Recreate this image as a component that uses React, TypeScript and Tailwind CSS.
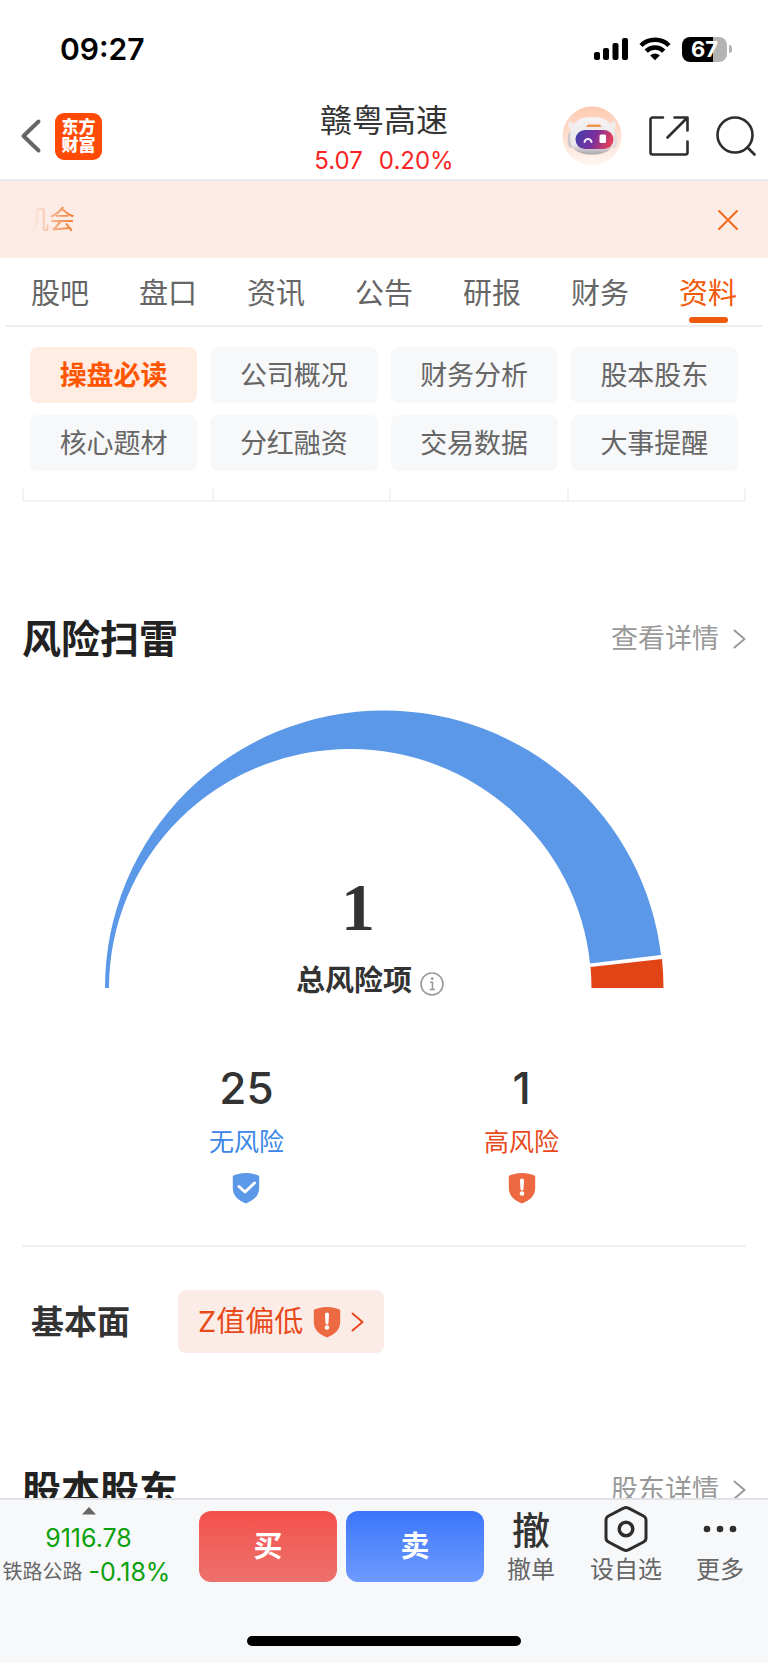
const tabs = ["股吧", "盘口", "资讯", "公告", "研报", "财务", "资料"];

const sections = [
  "操盘必读",
  "公司概况",
  "财务分析",
  "股本股东",
  "核心题材",
  "分红融资",
  "交易数据",
  "大事提醒",
];

const StatusBar = () => {
  return (
    <div className="flex items-center justify-between h-[98px] pl-[60px] pr-9">
      <div className="text-[30px] leading-[34px] font-semibold text-black">
        09:27
      </div>
      <div className="flex items-center gap-[11px]">
        <svg width="34" height="24" viewBox="0 0 34 24" fill="#000">
          <rect x="0" y="15" width="6" height="8" rx="2" />
          <rect x="9" y="11" width="6" height="12" rx="2" />
          <rect x="18.500" y="6" width="6" height="17" rx="2" />
          <rect x="28" y="1" width="6" height="22" rx="2" />
        </svg>
        <svg width="32" height="24" viewBox="0 0 32 24" fill="none" stroke="#000">
          <path d="M2 8.500a20 20 0 0 1 28 0" strokeWidth="4.500" />
          <path d="M7.200 14.200a12.500 12.500 0 0 1 17.600 0" strokeWidth="4.500" />
          <path d="M16 23.200l-4.800-4.700a6.800 6.800 0 0 1 9.600 0z" fill="#000" stroke="none" />
        </svg>
        <div className="flex items-center gap-[2px]">
          <div className="flex justify-center items-center w-[45px] h-[25px] rounded-[8px] bg-linear-to-r from-black from-[68%] to-[#b3b3b3] to-[68%] text-[22px] leading-[25px] font-bold text-white">
            67
          </div>
          <div className="w-[3px] h-[8px] rounded-r-full bg-[#b3b3b3]" />
        </div>
      </div>
    </div>
  );
};

const Robot = () => {
  return (
    <svg width="60" height="60" viewBox="0 0 60 60">
      <defs>
        <linearGradient id="halo" x1="0" y1="0" x2="0" y2="1">
          <stop offset="0" stopColor="#fdc9b0" />
          <stop offset="1" stopColor="#fff6f2" />
        </linearGradient>
        <linearGradient id="shell" x1="0" y1="0" x2="0" y2="1">
          <stop offset="0" stopColor="#f6f3f4" />
          <stop offset="0.750" stopColor="#e9e5e7" />
          <stop offset="1" stopColor="#aaa4a8" />
        </linearGradient>
        <linearGradient id="visor" x1="0" y1="0" x2="1" y2="0.200">
          <stop offset="0" stopColor="#3d3fae" />
          <stop offset="0.550" stopColor="#7a2f9c" />
          <stop offset="1" stopColor="#e0405c" />
        </linearGradient>
      </defs>
      <circle cx="30" cy="30" r="29.500" fill="url(#halo)" />
      <ellipse cx="9" cy="34" rx="3.500" ry="8" fill="#cfc8cc" />
      <ellipse cx="52" cy="34" rx="3.500" ry="8" fill="#e2dadd" />
      <path d="M8.500 13.500c0 3.500 3 5 9 4.500l-6 8c-5-1-7-8-3-12.500zM51.500 13.500c0 3.500-3 5-9 4.500l6 8c5-1 7-8 3-12.500z" fill="#f1ecee" />
      <path d="M30 11c12 0 20 4 22.500 16 2 14-5 21.500-22.500 21.500S6.500 41 8.500 27C11 15 18 11 30 11z" fill="url(#shell)" />
      <path d="M26 18.500h12l1.500 2.500H24z" fill="#ee9650" />
      <rect x="13.500" y="24" width="38" height="19" rx="9.500" fill="url(#visor)" />
      <path d="M22.500 36c1-4 6-4 7 0" fill="none" stroke="#f3e9ff" strokeWidth="2" strokeLinecap="round" />
      <rect x="37.500" y="28.500" width="6.500" height="8.500" rx="1.500" fill="#fff" />
    </svg>
  );
};

const Header = () => {
  return (
    <header className="grid grid-cols-[1fr_auto_1fr] items-start px-3 border-b-2 border-[#ebebed]">
      <div className="flex items-center gap-[13px] h-[76px] pl-2">
        <button type="button" aria-label="返回">
          <svg width="22" height="36" viewBox="0 0 22 36" fill="none" stroke="#666" strokeWidth="4" strokeLinecap="round" strokeLinejoin="round">
            <path d="M18.500 3.500L3.500 18l15 14.500" />
          </svg>
        </button>
        <a
          href="#home"
          className="flex flex-col justify-center items-center w-[47px] h-[47px] rounded-[9px] bg-[#ff4a05] text-[17px] leading-[18px] font-black text-white"
        >
          <span>东方</span>
          <span>财富</span>
        </a>
      </div>
      <div className="flex flex-col items-center gap-1 pt-[5px]">
        <h1 className="text-[32px] leading-[36px] text-[#333]">赣粤高速</h1>
        <div className="flex gap-4 text-[24px] leading-[36px] text-[#fa2424]">
          <span>5.07</span>
          <span>0.20%</span>
        </div>
      </div>
      <div className="flex justify-end items-center gap-[27px] h-[76px]">
        <button type="button" aria-label="智能助手">
          <Robot />
        </button>
        <button type="button" aria-label="分享">
          <svg width="40" height="40" viewBox="0 0 40 40" fill="none" stroke="#2d2d2d" strokeWidth="2.600" strokeLinecap="round" strokeLinejoin="round">
            <path d="M14 1.500H3.500a2 2 0 0 0-2 2v33a2 2 0 0 0 2 2h33a2 2 0 0 0 2-2V25.500" />
            <path d="M25.500 1.500h13v13M38 2L18.500 21.500" />
          </svg>
        </button>
        <button type="button" aria-label="搜索">
          <svg width="40" height="40" viewBox="0 0 40 40" fill="none" stroke="#2d2d2d" strokeWidth="2.600" strokeLinecap="round">
            <circle cx="19" cy="19" r="17.500" />
            <path d="M31.500 31.500l7 7" />
          </svg>
        </button>
      </div>
    </header>
  );
};

const Banner = () => {
  return (
    <div className="flex justify-between items-center h-[77px] pl-8 pr-[28px] bg-[#fcece5]">
      <div className="flex justify-end w-[43px] overflow-hidden text-[26px] leading-[36px] text-[#f0772e] mask-l-from-0% mask-l-to-100%">
        <span className="shrink-0">机会</span>
      </div>
      <button type="button" aria-label="关闭">
        <svg width="24" height="24" viewBox="0 0 24 24" fill="none" stroke="#f26a1b" strokeWidth="2" strokeLinecap="round">
          <path d="M3 3l18 18M21 3L3 21" />
        </svg>
      </button>
    </div>
  );
};

const Tabs = () => {
  return (
    <nav className="grid grid-cols-7 mx-[6px] h-[69px] border-b-2 border-[#efeff1]">
      {tabs.map((tab) => (
        <a
          key={tab}
          href={`#${tab}`}
          className={
            tab === "资料"
              ? "flex flex-col items-center pt-[15px] text-[29px] leading-[42px] text-[#f25a0c]"
              : "flex flex-col items-center pt-[15px] text-[29px] leading-[42px] text-[#666]"
          }
        >
          {tab}
          {tab === "资料" && (
            <span className="w-[39px] h-[6px] mt-[2px] rounded-full bg-[#ee5a0c]" />
          )}
        </a>
      ))}
    </nav>
  );
};

const SectionChips = () => {
  return (
    <div className="grid grid-cols-4 gap-x-[13px] gap-y-3 px-[30px] pt-5">
      {sections.map((name, i) => (
        <button
          key={name}
          type="button"
          className={
            i === 0
              ? "h-[56px] pt-[2px] rounded-[8px] bg-[#ffece3] text-[27px] leading-[40px] font-bold text-[#ff5500]"
              : "h-[56px] pt-[2px] rounded-[8px] bg-[#f7f8fa] text-[27px] leading-[40px] text-[#666]"
          }
        >
          {name}
        </button>
      ))}
    </div>
  );
};

const Chevron = () => {
  return (
    <svg width="13" height="20" viewBox="0 0 13 20" fill="none" stroke="currentColor" strokeWidth="2" strokeLinecap="round" strokeLinejoin="round">
      <path d="M1.500 1.500L11.500 10l-10 8.500" />
    </svg>
  );
};

const SectionTitle = ({ title, link }: { title: string; link: string }) => {
  return (
    <div className="flex justify-between items-center h-[60px] px-[22px]">
      <h2 className="text-[39px] leading-[60px] font-bold text-[#222]">
        {title}
      </h2>
      <a
        href={`#${link}`}
        className="flex items-center gap-[14px] text-[27px] leading-[40px] text-[#999]"
      >
        {link}
        <Chevron />
      </a>
    </div>
  );
};

const WarnShield = () => {
  return (
    <svg width="28" height="32" viewBox="0 0 28 32">
      <path d="M14 1c5 0 9 1 12.500 2.500.500.200.700.600.700 1V16c0 8-6 12.500-13.200 15.500C6.800 28.500.800 24 .800 16V4.500c0-.400.200-.800.700-1C5 2 9 1 14 1z" fill="#ec6941" />
      <path d="M12 8.500a2 2 0 0 1 4 0l-.500 8.500a1.500 1.500 0 0 1-3 0z" fill="#fff" />
      <circle cx="14" cy="21.500" r="2.300" fill="#fff" />
    </svg>
  );
};

const SafeShield = () => {
  return (
    <svg width="28" height="32" viewBox="0 0 28 32">
      <path d="M14 1c5 0 9 1 12.500 2.500.500.200.700.600.700 1V16c0 8-6 12.500-13.200 15.500C6.800 28.500.800 24 .800 16V4.500c0-.400.200-.800.700-1C5 2 9 1 14 1z" fill="#5b98e8" />
      <path d="M7 14.500l6 5.500 9.500-9" fill="none" stroke="#fff" strokeWidth="3" strokeLinecap="round" strokeLinejoin="round" />
    </svg>
  );
};

const Gauge = () => {
  return (
    <div className="relative w-[560px] mx-auto">
      <svg viewBox="0 0 560 278" className="block w-full">
        <path d="M1 278A279 277.500 0 0 1 280 0.500A279 277.500 0 0 1 557 245L486 253.500A241.250 239 0 0 0 246.250 39A241.250 239 0 0 0 5 278z" fill="#5b98e8" />
        <path d="M558 249A279 277.500 0 0 1 559.500 278H487.500A241 239.500 0 0 0 486.500 257z" fill="#e14516" />
      </svg>
      <div className="absolute inset-x-0 top-[157px] flex flex-col items-center pr-[28px]">
        <div className="font-['Liberation_Serif',serif] text-[68px] leading-[80px] font-bold text-[#333] pr-[24px]">
          1
        </div>
        <div className="flex items-center gap-2 mt-[13px]">
          <span className="text-[29px] leading-[42px] font-bold text-[#333]">
            总风险项
          </span>
          <button type="button" aria-label="说明" className="mt-[6px]">
            <svg width="24" height="24" viewBox="0 0 24 24" fill="none" stroke="#999" strokeWidth="1.600">
              <circle cx="12" cy="12" r="11" />
              <path d="M10 10.200h2.500v7M9.500 17.500h5.500" />
              <circle cx="12.200" cy="6.700" r="1.400" fill="#999" stroke="none" />
            </svg>
          </button>
        </div>
      </div>
    </div>
  );
};

const RiskCounts = () => {
  return (
    <div className="flex justify-center gap-[200px] pt-[73px]">
      <div className="flex flex-col items-center">
        <div className="text-[44px] leading-[54px] font-medium text-[#333]">
          25
        </div>
        <div className="mt-[9px] text-[25px] leading-[36px] text-[#3b86e8]">
          无风险
        </div>
        <div className="mt-[12px]">
          <SafeShield />
        </div>
      </div>
      <div className="flex flex-col items-center">
        <div className="text-[44px] leading-[54px] font-medium text-[#333]">
          1
        </div>
        <div className="mt-[9px] text-[25px] leading-[36px] text-[#e8491b]">
          高风险
        </div>
        <div className="mt-[12px]">
          <WarnShield />
        </div>
      </div>
    </div>
  );
};

const BottomBar = () => {
  return (
    <footer className="shrink-0 border-t-2 border-[#e1e2e5] bg-[#f7f8fa]">
      <div className="flex h-[92px]">
        <button type="button" className="flex flex-col items-center w-[177px] pt-[7px]">
          <svg width="14" height="8" viewBox="0 0 14 8" fill="#666">
            <path d="M7 0l7 7.500H0z" />
          </svg>
          <span className="mt-[6px] text-[25px] leading-[34px] text-[#0ba10b]">
            9116.78
          </span>
          <span className="flex items-center gap-[6px] pr-1 text-[25px] leading-[34px] text-[#0ba10b] whitespace-nowrap">
            <span className="text-[20px] text-[#666]">铁路公路</span>
            -0.18%
          </span>
        </button>
        <div className="flex gap-[9px] flex-1 pt-[11px] pl-[22px]">
          <button
            type="button"
            className="flex-1 h-[71px] rounded-[12px] bg-linear-to-b from-[#f4504b] to-[#ed716c] text-[29px] font-bold text-white"
          >
            买
          </button>
          <button
            type="button"
            className="flex-1 h-[71px] rounded-[12px] bg-linear-to-b from-[#3b76fa] to-[#6e9aff] text-[29px] font-bold text-white"
          >
            卖
          </button>
        </div>
        <div className="flex w-[284px] pl-[1px] text-[24px] leading-[34px] text-[#666]">
          <button type="button" className="flex flex-col items-center w-[92px] pt-[5px]">
            <span className="h-[48px] text-[38px] leading-[50px] font-medium text-[#333]">
              撤
            </span>
            撤单
          </button>
          <button type="button" className="flex flex-col items-center w-[98px] pt-[5px]">
            <span className="flex items-center h-[48px]">
              <svg width="44" height="48" viewBox="0 0 44 48" fill="none" stroke="#2d2d2d">
                <path d="M19.500 3.200q2.500-1.400 5 0L39.500 11Q42 12.300 42 15v18q0 2.700-2.500 4L24.500 44.800q-2.500 1.400-5 0L4.500 37Q2 35.700 2 33V15q0-2.700 2.500-4z" strokeWidth="3" />
                <circle cx="22" cy="24" r="6.800" strokeWidth="3.500" />
              </svg>
            </span>
            设自选
          </button>
          <button type="button" className="flex flex-col items-center w-[90px] pt-[5px]">
            <span className="flex items-center h-[48px]">
              <svg width="34" height="8" viewBox="0 0 34 8" fill="#2d2d2d">
                <circle cx="4" cy="4" r="3.300" />
                <circle cx="17" cy="4" r="3.300" />
                <circle cx="30" cy="4" r="3.300" />
              </svg>
            </span>
            更多
          </button>
        </div>
      </div>
      <div className="h-[71px] pt-[44px]">
        <div className="w-[274px] h-[10px] mx-auto rounded-full bg-black" />
      </div>
    </footer>
  );
};

export default function App() {
  return (
    <div className="flex flex-col h-screen bg-white font-[Inter,'Noto_Sans_CJK_SC',sans-serif]">
      <StatusBar />
      <Header />
      <Banner />
      <Tabs />
      <SectionChips />
      <main className="flex-1 min-h-0 mt-[18px] overflow-y-auto [scrollbar-width:none]">
        <div className="grid grid-cols-[190px_1fr_1fr_1fr] h-[13px] mx-[22px] border-b-2 border-l-2 border-[#f3f3f5]">
          <div className="border-r-2 border-[#f3f3f5]" />
          <div className="border-r-2 border-[#f3f3f5]" />
          <div className="border-r-2 border-[#f3f3f5]" />
          <div className="border-r-2 border-[#f3f3f5]" />
        </div>
        <section className="pt-[107px]">
          <SectionTitle title="风险扫雷" link="查看详情" />
          <div className="pt-[41px]">
            <Gauge />
          </div>
          <RiskCounts />
          <div className="mx-[22px] mt-[41px] border-t-2 border-[#f1f1f3]" />
          <div className="flex items-center gap-[48px] pt-[43px] pl-[31px]">
            <h3 className="text-[33px] leading-[48px] font-bold text-[#333]">
              基本面
            </h3>
            <button
              type="button"
              className="flex items-center h-[63px] px-5 rounded-[8px] bg-[#fcece7] text-[29px] leading-[42px] text-[#e8491b]"
            >
              Z值偏低
              <span className="ml-[10px] mr-[10px]">
                <WarnShield />
              </span>
              <Chevron />
            </button>
          </div>
        </section>
        <section className="pt-[107px]">
          <SectionTitle title="股本股东" link="股东详情" />
        </section>
      </main>
      <BottomBar />
    </div>
  );
}
